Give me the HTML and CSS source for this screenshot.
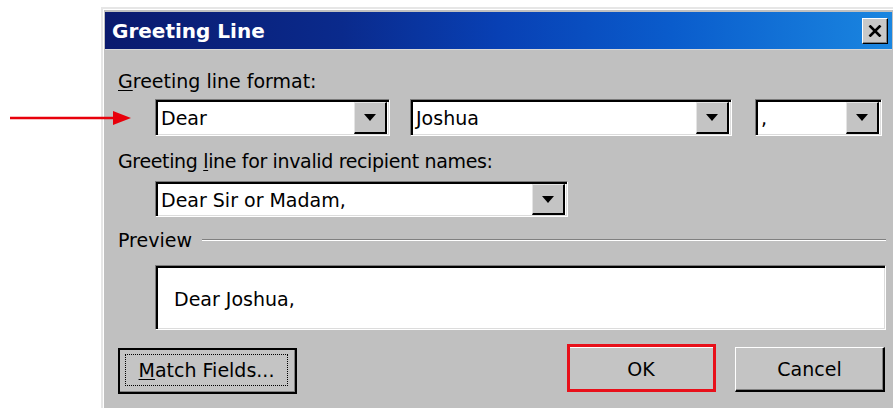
FILE: index.html
```html
<!DOCTYPE html>
<html lang="en">
<head>
<meta charset="utf-8">
<title>Greeting Line</title>
<link rel="stylesheet" href="styles.css">
</head>
<body>
<div class="stage">
  <svg class="pointer" width="132" height="18" viewBox="0 0 132 18" aria-hidden="true">
    <line x1="10" y1="9" x2="116" y2="9" stroke="#e8000b" stroke-width="2.5"/>
    <polygon points="113,2 131,9 113,16" fill="#e8000b"/>
  </svg>

  <div class="dialog">
    <div class="titlebar">
      <span class="title">Greeting Line</span>
      <span class="close" aria-label="Close">
        <svg width="14" height="12" viewBox="0 0 14 12"><path d="M1.5 0.5 L12.5 11.5 M12.5 0.5 L1.5 11.5" stroke="#000" stroke-width="2.6"/></svg>
      </span>
    </div>

    <div class="body">
      <div class="label label-first"><u>G</u>reeting line format:</div>
      <div class="row row-format">
        <div class="combo w-salutation"><span class="value">Dear</span><span class="drop"><i class="arrow"></i></span></div>
        <div class="combo w-name"><span class="value">Joshua</span><span class="drop"><i class="arrow"></i></span></div>
        <div class="combo w-punct"><span class="value">,</span><span class="drop"><i class="arrow"></i></span></div>
      </div>

      <div class="label label-invalid">Greeting <u>l</u>ine for invalid recipient names:</div>
      <div class="row row-invalid">
        <div class="combo w-invalid short"><span class="value">Dear Sir or Madam,</span><span class="drop"><i class="arrow"></i></span></div>
      </div>

      <div class="group-head">
        <span class="label">Preview</span>
        <span class="etch"></span>
      </div>
      <div class="preview">Dear Joshua,</div>

      <div class="buttons">
        <button class="btn btn-default"><span class="focus"><u>M</u>atch Fields...</span></button>
        <span class="spacer"></span>
        <button class="btn btn-ok">OK</button>
        <button class="btn btn-cancel">Cancel</button>
      </div>
    </div>
  </div>
</div>
</body>
</html>
```

FILE: styles.css
```css
html, body {
  margin: 0;
  padding: 0;
  background: #ffffff;
  overflow: hidden;
}

.stage {
  position: relative;
  width: 893px;
  height: 408px;
  padding: 7px 0 0 101px;
  box-sizing: border-box;
  font-family: "DejaVu Sans", "Liberation Sans", sans-serif;
  font-size: 19px;
  color: #000;
}

/* annotation arrow pointing at the first row */
.pointer {
  position: absolute;
  left: 0;
  top: 109px;
}

.dialog {
  width: 794px;
  height: 420px;
  box-sizing: border-box;
  background: #c0c0c0;
  border-top: 2px solid #e6e6e6;
  border-left: 2px solid #e6e6e6;
  box-shadow: inset 1px 1px 0 #ffffff;
  padding: 3px 3px 0 2px;
  display: flex;
  flex-direction: column;
}

.titlebar {
  height: 37px;
  display: flex;
  align-items: center;
  justify-content: space-between;
  padding: 0 4px 0 7px;
  background: linear-gradient(90deg, #0a1a6e 0%, #0a2a8c 30%, #0840b4 50%, #0a5ccc 72%, #1a86e0 100%);
}

.title {
  color: #fff;
  font-weight: bold;
  font-size: 20px;
}

.close {
  width: 26px;
  height: 26px;
  box-sizing: border-box;
  display: flex;
  align-items: center;
  justify-content: center;
  background: #c8c8c8;
  border: 1px solid;
  border-color: #ffffff #000000 #000000 #ffffff;
  box-shadow: inset -1px -1px 0 #808080;
}

.body {
  flex: 1;
  padding: 0 0 0 13px;
  display: flex;
  flex-direction: column;
  border-top: 1px solid #d8d8d8;
}

.label {
  line-height: 22px;
  height: 22px;
  white-space: nowrap;
}

.label u { text-decoration-thickness: 1px; text-underline-offset: 2px; }

.label-first { margin-top: 20px; }
.label-invalid { margin-top: 14px; letter-spacing: -0.35px; }

.row {
  display: flex;
  padding-left: 37px;
}

.row-format { margin-top: 7px; gap: 20px; }
.row-format .w-name { margin-right: 3px; }
.row-invalid { margin-top: 9px; }

/* sunken combo box */
.combo {
  height: 37px;
  box-sizing: border-box;
  display: flex;
  align-items: stretch;
  background: #fff;
  border: 1px solid;
  border-color: #7a7a7a #ffffff #ffffff #7a7a7a;
  box-shadow: inset 2px 2px 0 #000, inset -1px -1px 0 #dcdcdc;
  padding: 2px 2px 1px 2px;
}
.combo.short { height: 36px; }

.w-salutation { width: 235px; }
.w-name { width: 322px; }
.w-punct { width: 127px; }
.w-invalid { width: 413px; }

.value {
  flex: 1;
  display: flex;
  align-items: center;
  padding-left: 3px;
  white-space: nowrap;
  overflow: hidden;
}

.drop {
  width: 33px;
  box-sizing: border-box;
  display: flex;
  align-items: center;
  justify-content: center;
  background: #c4c4c4;
  border: 1px solid;
  border-color: #e4e4e4 #000 #000 #e4e4e4;
  border-right-width: 2px;
  border-bottom-width: 2px;
}

.arrow {
  width: 0;
  height: 0;
  border-left: 6px solid transparent;
  border-right: 6px solid transparent;
  border-top: 7px solid #000;
}

.group-head {
  margin-top: 12px;
  display: flex;
  align-items: center;
  gap: 10px;
  padding-right: 6px;
}

.etch {
  flex: 1;
  height: 0;
  border-top: 1px solid #808080;
  border-bottom: 1px solid #ffffff;
}

.preview {
  margin: 14px 6px 0 37px;
  height: 65px;
  box-sizing: border-box;
  background: #fff;
  border: 1px solid;
  border-color: #7a7a7a #ffffff #ffffff #7a7a7a;
  box-shadow: inset 2px 2px 0 #000, inset -1px -1px 0 #dcdcdc;
  display: flex;
  align-items: center;
  padding: 3px 0 0 18px;
}

.buttons {
  margin-top: 17px;
  display: flex;
  align-items: flex-start;
  padding-right: 7px;
}

.spacer { flex: 1; }

.btn {
  position: relative;
  height: 45px;
  box-sizing: border-box;
  font: inherit;
  color: #000;
  background: #c4c4c4;
  border: 1px solid;
  border-color: #ffffff #000000 #000000 #ffffff;
  border-right-width: 2px;
  border-bottom-width: 2px;
  box-shadow: inset -1px -1px 0 #808080;
  padding: 0;
  display: flex;
  align-items: center;
  justify-content: center;
}

.btn-default {
  width: 179px;
  height: 46px;
  margin-top: 1px;
  outline: 2px solid #000;
  outline-offset: -2px;
  padding: 5px 7px 6px 6px;
  align-items: stretch;
}

.focus {
  flex: 1;
  display: flex;
  align-items: center;
  justify-content: center;
  border: 1px dotted #000;
}
.focus u { text-underline-offset: 2px; }

.btn-ok {
  width: 149px;
  margin-right: 19px;
}

/* red highlight frame drawn over the OK button */
.btn-ok::after {
  content: "";
  position: absolute;
  left: -1px;
  right: -2px;
  top: -4px;
  bottom: -2px;
  border: 3px solid #e8101a;
}

.btn-cancel { width: 150px; }
```
